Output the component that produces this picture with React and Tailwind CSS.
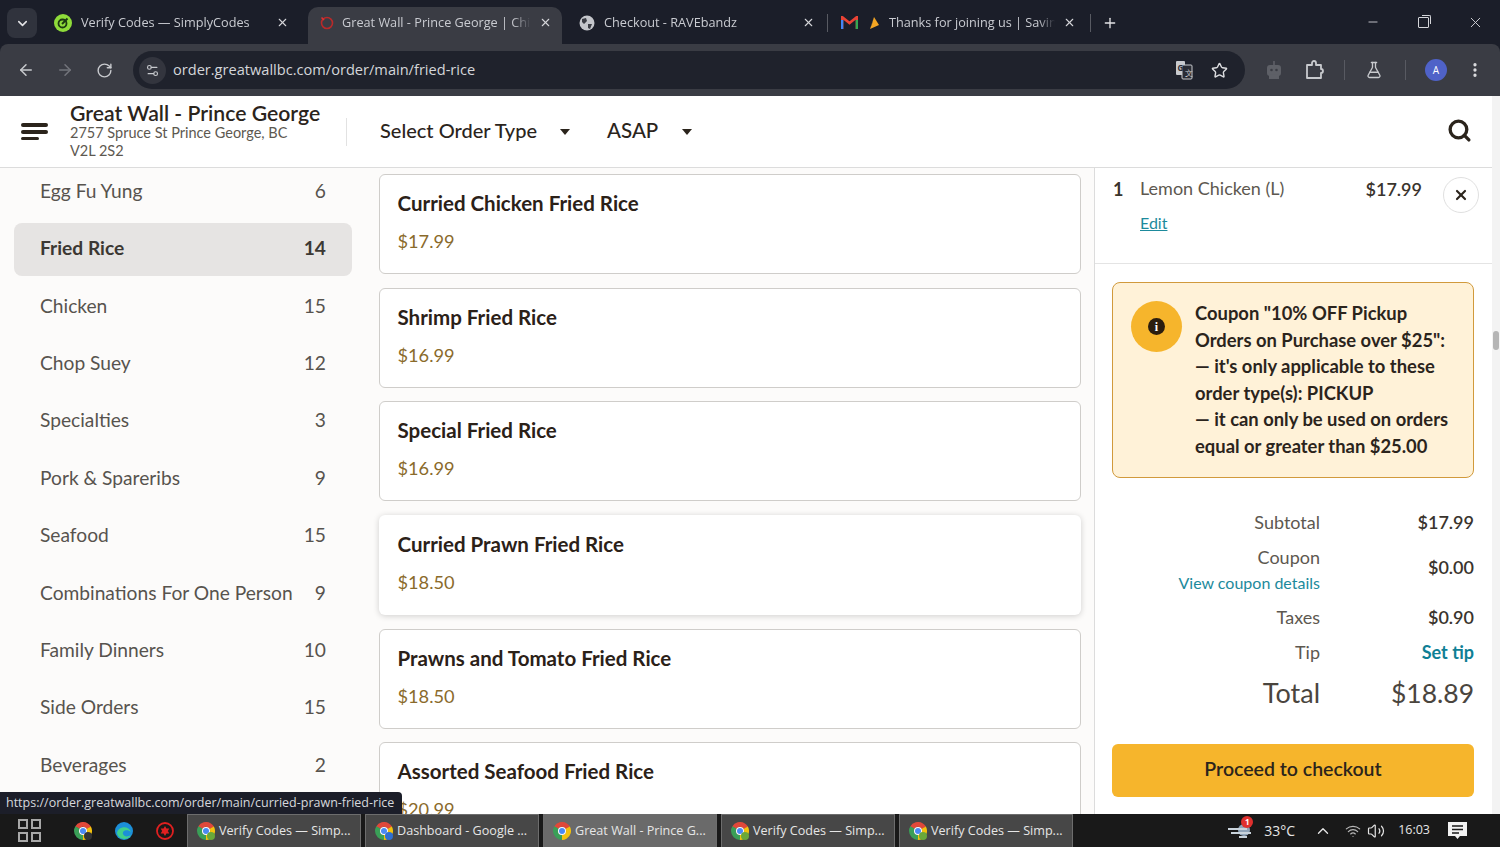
import React from 'react';
import { ArrowLeft, ArrowRight, RotateCw, Star, FlaskConical, EllipsisVertical, Minus, X, Plus, ChevronDown, ChevronUp, Search, Settings2, Volume2, Wifi } from 'lucide-react';

const categories = [
    ['Egg Fu Yung', 6],
    ['Fried Rice', 14],
    ['Chicken', 15],
    ['Chop Suey', 12],
    ['Specialties', 3],
    ['Pork & Spareribs', 9],
    ['Seafood', 15],
    ['Combinations For One Person', 9],
    ['Family Dinners', 10],
    ['Side Orders', 15],
    ['Beverages', 2],
];

const dishes = [
    ['Curried Chicken Fried Rice', '$17.99'],
    ['Shrimp Fried Rice', '$16.99'],
    ['Special Fried Rice', '$16.99'],
    ['Curried Prawn Fried Rice', '$18.50'],
    ['Prawns and Tomato Fried Rice', '$18.50'],
    ['Assorted Seafood Fried Rice', '$20.99'],
];

const ChromeLogo = ({ badge }) => (
    <svg width="18" height="18" viewBox="0 0 18 18" className="shrink-0">
        <circle cx="9" cy="9" r="6.5" fill="none" stroke="#e0483a" strokeWidth="5" strokeDasharray="13.6 27.2" transform="rotate(-150 9 9)" />
        <circle cx="9" cy="9" r="6.5" fill="none" stroke="#f4c20d" strokeWidth="5" strokeDasharray="13.6 27.2" transform="rotate(-30 9 9)" />
        <circle cx="9" cy="9" r="6.5" fill="none" stroke="#3a9f57" strokeWidth="5" strokeDasharray="13.6 27.2" transform="rotate(90 9 9)" />
        <circle cx="9" cy="9" r="4" fill="#fff" />
        <circle cx="9" cy="9" r="3" fill="#4a8af4" />
        {badge && <circle cx="14" cy="14" r="4" fill={badge} />}
    </svg>
);

const Tab = ({ icon, title, active, className }) => (
    <div className={`relative flex items-center h-full shrink-0 ${active ? 'bg-[#3a3c44] rounded-t-[10px]' : ''} ${className}`}>
        {icon}
        <span className="flex-1 min-w-0 overflow-hidden whitespace-nowrap text-[12.7px] text-[#c9cbd1] [mask-image:linear-gradient(to_right,black_90%,transparent)]">{title}</span>
        <X size={13} strokeWidth={2} className="shrink-0 ml-[8px] text-[#d5d6da]" />
    </div>
);

const BrowserTabs = () => (
    <div className="h-[44px] flex items-end pl-[7px] font-['Open_Sans',sans-serif]">
        <div className="w-[30px] h-[30px] mb-[6px] rounded-lg bg-[#30333d] flex items-center justify-center">
            <ChevronDown size={15} strokeWidth={2.5} className="text-[#e3e3e6]" />
        </div>
        <div className="flex h-[37px] ml-[8px] pb-[6px]">
            <Tab
                className="w-[263px] pl-[9px] pr-[19px]"
                title="Verify Codes — SimplyCodes"
                icon={
                    <svg width="18" height="18" viewBox="0 0 18 18" className="mr-[9px] shrink-0">
                        <circle cx="9" cy="9" r="9" fill="#8fdc3a" />
                        <circle cx="8.5" cy="9.5" r="4" fill="none" stroke="#1d3a12" strokeWidth="1.8" />
                        <path d="M8 10 L13.5 4.5" fill="none" stroke="#1d3a12" strokeWidth="2" />
                    </svg>
                }
            />
        </div>
        <Tab
            active
            className="w-[254px] pl-[11px] pr-[10px] !h-[37px] pb-[6px]"
            title="Great Wall - Prince George | Chinese"
            icon={
                <svg width="16" height="16" viewBox="0 0 16 16" className="mr-[7px] shrink-0">
                    <circle cx="8" cy="8" r="5.5" fill="none" stroke="#b92a2a" strokeWidth="1.6" />
                    <path d="M2.5 2.5 L5 5" stroke="#e03030" strokeWidth="1.6" />
                </svg>
            }
        />
        <div className="flex h-[37px] pb-[6px]">
            <Tab
                className="w-[265px] pl-[17px] pr-[12px]"
                title="Checkout - RAVEbandz"
                icon={
                    <svg width="16" height="16" viewBox="0 0 16 16" className="mr-[9px] shrink-0">
                        <circle cx="8" cy="8" r="7.5" fill="#c4c6cb" />
                        <path d="M3 4 L7 3 L8 6 L5 9 L3 7 Z M9 9 L13 9 L11 14 L9 13 Z" fill="#3a3c44" />
                    </svg>
                }
            />
            <div className="w-px h-[18px] mt-[7px] bg-[#585a62]" />
            <Tab
                className="w-[262px] pl-[13px] pr-[14px]"
                title="Thanks for joining us | Saving"
                icon={
                    <>
                        <svg width="17" height="13" viewBox="0 0 17 13" className="mr-[10px] shrink-0">
                            <path d="M1 13 V1 L8.5 7 L16 1 V13" fill="none" stroke="#ea4335" strokeWidth="2.6" />
                            <path d="M1 13 V4" stroke="#4285f4" strokeWidth="2.6" />
                            <path d="M16 13 V4" stroke="#34a853" strokeWidth="2.6" />
                        </svg>
                        <svg width="12" height="14" viewBox="0 0 12 14" className="mr-[9px] shrink-0">
                            <path d="M6 1 L11 9 L2 13 Z" fill="#f5a623" />
                            <path d="M6 1 L2 13 L4 8 Z" fill="#1a2b4a" />
                        </svg>
                    </>
                }
            />
            <div className="w-px h-[18px] mt-[7px] bg-[#585a62]" />
            <Plus size={16} strokeWidth={2} className="text-[#e3e3e6] ml-[11px] mt-[8px]" />
        </div>
        <div className="ml-auto flex items-center h-full text-[#d5d6da] pr-[16px]">
            <Minus size={14} strokeWidth={1.5} />
            <div className="ml-[38px] w-[11px] h-[11px] border border-[#d5d6da] rounded-[1px] relative">
                <div className="absolute -top-[3px] -right-[3px] w-[9px] h-[9px] border-t border-r border-[#d5d6da] rounded-tr-[2px]" />
            </div>
            <X size={17} strokeWidth={1.3} className="ml-[38px]" />
        </div>
    </div>
);

const BrowserToolbar = () => (
    <div className="h-[52px] bg-[#3a3c44] rounded-t-lg flex items-center pl-[17px] pr-[16px] text-[#c8cace] font-['Open_Sans',sans-serif]">
        <ArrowLeft size={18} strokeWidth={2} />
        <ArrowRight size={18} strokeWidth={2} className="ml-[21px] text-[#72747b]" />
        <RotateCw size={17} strokeWidth={2} className="ml-[22px]" />
        <div className="ml-[20px] w-[1113px] h-[38px] rounded-full bg-[#1f222c] flex items-center pl-[6px] pr-[17px]">
            <div className="w-[27px] h-[27px] rounded-full bg-[#33353e] flex items-center justify-center">
                <Settings2 size={15} strokeWidth={1.8} />
            </div>
            <span className="ml-[7px] text-[14.6px] text-[#d4d6da]">order.greatwallbc.com/order/main/fried-rice</span>
            <svg width="18" height="20" viewBox="0 0 18 20" className="ml-auto">
                <rect x="1" y="1" width="9" height="14" rx="1" fill="#c8cace" />
                <rect x="7" y="5" width="10" height="14" rx="1" fill="#2a2c34" stroke="#c8cace" />
                <text x="2.5" y="11" fontSize="8" fontWeight="700" fill="#2a2c34">G</text>
                <text x="9.5" y="16" fontSize="8" fill="#c8cace">文</text>
            </svg>
            <Star size={17} strokeWidth={2} className="ml-[18px] text-[#dcdde0]" />
        </div>
        <svg width="20" height="20" viewBox="0 0 20 20" className="ml-[19px]">
            <path d="M10 1 V5" stroke="#5e6067" strokeWidth="1.6" />
            <rect x="3" y="5" width="14" height="11" rx="3" fill="#5e6067" />
            <rect x="5" y="15" width="10" height="4" fill="#5e6067" />
            <circle cx="7.5" cy="10" r="1.3" fill="#3a3c44" />
            <circle cx="12.5" cy="10" r="1.3" fill="#3a3c44" />
        </svg>
        <svg width="20" height="20" viewBox="0 0 20 20" className="ml-[21px]" fill="none" stroke="#c8cace" strokeWidth="1.8">
            <path d="M2 5 H7 V3 A2 2 0 0 1 11 3 V5 H16 V9 A2 2 0 0 1 16 13 V18 H2 Z" strokeLinejoin="round" />
        </svg>
        <div className="ml-[19px] w-px h-[20px] bg-[#585a62]" />
        <FlaskConical size={18} strokeWidth={1.8} className="ml-[20px]" />
        <div className="ml-[22px] w-px h-[20px] bg-[#585a62]" />
        <div className="ml-[19px] w-[22px] h-[22px] rounded-full bg-[#4f62c8] flex items-center justify-center text-[10px] text-white">A</div>
        <EllipsisVertical size={18} strokeWidth={2.4} className="ml-[19px] text-[#dcdde0]" />
    </div>
);

const PageHeader = () => (
    <div className="h-[72px] bg-white border-b border-[#dcdcdc] flex items-center pl-[21px] pr-[20px] text-[#2b241c]">
        <div className="flex flex-col gap-[3px] w-[27px]">
            <div className="h-[4px] w-[27px] rounded-full bg-[#2b241c]" />
            <div className="h-[4px] w-[27px] rounded-full bg-[#2b241c]" />
            <div className="h-[3px] w-[18px] rounded-full bg-[#2b241c]" />
        </div>
        <div className="ml-[22px] w-[260px] -mt-[2px]">
            <div className="text-[21.2px] leading-[24px] font-semibold">Great Wall - Prince George</div>
            <div className="-mt-[1px] text-[14.5px] leading-[18px] text-[#5d5850]">2757 Spruce St Prince George, BC<br />V2L 2S2</div>
        </div>
        <div className="ml-[16px] w-px h-[28px] bg-[#e2e2e2]" />
        <div className="ml-[33px] -mt-[3px] text-[20px] font-medium">Select Order Type</div>
        <div className="ml-[23px] w-0 h-0 border-x-[5.5px] border-x-transparent border-t-[6px] border-t-[#2b241c]" />
        <div className="ml-[37px] -mt-[3px] text-[20.5px] font-medium">ASAP</div>
        <div className="ml-[24px] w-0 h-0 border-x-[5.5px] border-x-transparent border-t-[6px] border-t-[#2b241c]" />
        <Search size={25} strokeWidth={3.2} className="ml-auto -mt-[3px]" />
    </div>
);

const Sidebar = () => (
    <div className="w-[366px] shrink-0 bg-[#fcfbfa] px-[14px] overflow-hidden">
        <div className="flex flex-col gap-[4.35px] -mt-[2.5px]">
            {categories.map(([name, count]) => (
                <div
                    key={name}
                    className={`h-[53px] shrink-0 rounded-lg flex items-center justify-between pl-[26px] pr-[26px] pb-[1px] text-[19.2px] ${name === 'Fried Rice' ? 'bg-[#e6e4e3] font-bold text-[#3c3833]' : 'text-[#57534e]'}`}
                >
                    <span>{name}</span>
                    <span>{count}</span>
                </div>
            ))}
        </div>
    </div>
);

const MenuList = () => (
    <div className="flex-1 min-w-0 bg-[#fcfbfa] overflow-hidden pt-[6px] pl-[13px] pr-[13px] relative">
        <div className="flex flex-col gap-[13.7px]">
            {dishes.map(([name, price]) => (
                <div
                    key={name}
                    className={`h-[100px] shrink-0 bg-white rounded-md pl-[17.5px] pt-[14px] border ${name === 'Curried Prawn Fried Rice' ? 'border-transparent shadow-[0_1px_6px_rgba(0,0,0,0.18)]' : 'border-[#cfcdca]'}`}
                >
                    <div className="text-[20.5px] leading-[28px] font-bold text-[#2b2118]">{name}</div>
                    <div className="mt-[12px] text-[18.2px] leading-[24px] text-[#8a6a2b]">{price}</div>
                </div>
            ))}
        </div>
    </div>
);

const Cart = () => (
    <div className="w-[398px] shrink-0 bg-white border-l border-[#dcdcdc] overflow-hidden text-[#3a342d]">
        <div className="h-[96px] border-b border-[#e4e4e4] flex pl-[18px] pr-[13px] pt-[9px]">
            <div className="w-[27px] text-[18px] leading-[24px] font-bold">1</div>
            <div className="flex-1">
                <div className="-mt-[1px] text-[18px] leading-[24px] text-[#5d5850]">Lemon Chicken (L)</div>
                <div className="mt-[11px] text-[16px] leading-[24px] text-[#1d8a9c] underline">Edit</div>
            </div>
            <div className="text-[18px] leading-[24px] font-semibold">$17.99</div>
            <div className="ml-[21px] w-[36px] h-[36px] rounded-full border border-[#e0e0e0] flex items-center justify-center">
                <X size={16} strokeWidth={3.2} className="text-[#2b241c]" />
            </div>
        </div>
        <div className="pl-[17px] pr-[18px] pt-[18px]">
            <div className="h-[196px] rounded-lg border border-[#d19a3c] bg-[#fff2d8] flex pl-[18px] pt-[18px]">
                <div className="w-[51px] h-[51px] shrink-0 rounded-full bg-[#f6b52c] flex items-center justify-center">
                    <div className="w-[17px] h-[17px] rounded-full bg-[#2b1d0e] flex items-center justify-center text-white text-[12px] font-bold font-['Liberation_Serif',serif]">i</div>
                </div>
                <div className="ml-[13px] text-[18.4px] leading-[26.5px] font-bold text-[#2b241c] -mt-[1px] whitespace-nowrap">
                    Coupon "10% OFF Pickup<br />
                    Orders on Purchase over $25":<br />
                    — it's only applicable to these<br />
                    order type(s): PICKUP<br />
                    — it can only be used on orders<br />
                    equal or greater than $25.00
                </div>
            </div>
            <div className="mt-[27px] grid grid-cols-[208px_1fr] text-[18px] items-center text-right">
                <div className="leading-[35px] text-[#5d5850]">Subtotal</div>
                <div className="leading-[35px] font-semibold">$17.99</div>
                <div className="leading-[25px] pt-[5px] text-[#5d5850]">
                    Coupon
                    <div className="text-[16px] text-[#1d8a9c]">View coupon details</div>
                </div>
                <div className="leading-[25px] font-semibold">$0.00</div>
                <div className="leading-[35px] mt-[5px] text-[#5d5850]">Taxes</div>
                <div className="leading-[35px] mt-[5px] font-semibold">$0.90</div>
                <div className="leading-[35px] text-[#5d5850]">Tip</div>
                <div className="leading-[35px] font-bold text-[#0f7f95]">Set tip</div>
                <div className="leading-[46px] text-[27px] text-[#4a453e]">Total</div>
                <div className="leading-[46px] text-[26.5px] text-[#4a453e]">$18.89</div>
            </div>
            <div className="mt-[28px] h-[53px] pb-[3px] rounded-md bg-[#f6b52c] flex items-center justify-center text-[19.5px] font-semibold text-[#2b241c]">Proceed to checkout</div>
        </div>
    </div>
);

const TaskButton = ({ label, active, badge }) => (
    <div className={`w-[174px] h-[33px] shrink-0 flex items-center gap-[4px] pl-[9px] border-x border-t border-[#6d6d6d] text-[12.6px] text-[#e6e6e6] ${active ? 'bg-[#6a6a6a]' : 'bg-[#474747]'}`}>
        <ChromeLogo badge={badge} />
        <span className="whitespace-nowrap">{label}</span>
    </div>
);

const Taskbar = () => (
    <div className="h-[33px] bg-[#191919] flex items-center font-['Open_Sans',sans-serif]">
        <div className="ml-[18px] grid grid-cols-2 gap-[3px]">
            <div className="w-[10px] h-[10px] border-2 border-[#a8a8a8]" />
            <div className="w-[10px] h-[10px] border-2 border-[#a8a8a8]" />
            <div className="w-[10px] h-[10px] border-2 border-[#a8a8a8]" />
            <div className="w-[10px] h-[10px] border-2 border-[#a8a8a8]" />
        </div>
        <div className="ml-[33px]"><ChromeLogo badge="#333" /></div>
        <svg width="20" height="20" viewBox="0 0 20 20" className="ml-[22px]">
            <circle cx="10" cy="10" r="9" fill="#1c8fd8" />
            <path d="M3 12 C4 5 15 4 17 11 C14 8 8 9 9 13 C10 16 14 16 17 14 C14 20 4 19 3 12 Z" fill="#3fd08c" />
        </svg>
        <svg width="20" height="20" viewBox="0 0 20 20" className="ml-[21px]" fill="none">
            <circle cx="10" cy="10" r="8" stroke="#e02020" strokeWidth="1.8" />
            <path d="M10 5 L14.3 12.5 H5.7 Z M10 15 L5.7 7.5 H14.3 Z" fill="#e02020" />
        </svg>
        <div className="ml-[12px] flex gap-[4px]">
            <TaskButton label="Verify Codes — Simp..." badge="#6aa83a" />
            <TaskButton label="Dashboard - Google ..." badge="#2f6fd0" />
            <TaskButton label="Great Wall - Prince G..." active />
            <TaskButton label="Verify Codes — Simp..." badge="#6aa83a" />
            <TaskButton label="Verify Codes — Simp..." badge="#6aa83a" />
        </div>
        <div className="ml-auto flex items-center text-[#e6e6e6] text-[14px] pr-[33px]">
            <div className="relative">
                <svg width="26" height="22" viewBox="0 0 26 22">
                    <circle cx="17" cy="10" r="6" fill="#8fa3b8" />
                    <path d="M1 9 H20 M4 13 H24 M12 17 H20" stroke="#c9d3dc" strokeWidth="2" />
                </svg>
                <div className="absolute -top-[4px] right-0 w-[12px] h-[12px] rounded-full bg-[#e0302e] text-white text-[8px] leading-[12px] text-center font-bold">1</div>
            </div>
            <span className="ml-[11px]">33°C</span>
            <ChevronUp size={18} strokeWidth={1.8} className="ml-[19px]" />
            <Wifi size={16} strokeWidth={1.8} className="ml-[13px] text-[#b8b8b8]" />
            <Volume2 size={18} strokeWidth={1.6} className="ml-[6px]" />
            <span className="ml-[13px] text-[12.5px]">16:03</span>
            <svg width="19" height="18" viewBox="0 0 19 18" className="ml-[18px]">
                <path d="M0 0 H19 V14 H12 L9.5 17 L7 14 H0 Z" fill="#f2f2f2" />
                <path d="M4 4 H15 M4 7.5 H15 M4 11 H11" stroke="#191919" strokeWidth="1.3" />
            </svg>
        </div>
    </div>
);

const App = () => {
    return (
        <div className="w-[1500px] h-[847px] flex flex-col overflow-hidden relative bg-[#1b1e29]">
            <BrowserTabs />
            <BrowserToolbar />
            <div className="flex-1 min-h-0 flex font-['Lato',sans-serif]">
                <div className="flex-1 min-w-0 flex flex-col">
                    <PageHeader />
                    <div className="flex-1 min-h-0 flex">
                        <Sidebar />
                        <MenuList />
                        <Cart />
                    </div>
                </div>
                <div className="w-[8px] bg-[#f3f3f3] pt-[235px] px-[1px]">
                    <div className="w-[6px] h-[19px] rounded-full bg-[#b5b5b5]" />
                </div>
            </div>
            <Taskbar />
            <div className="absolute left-0 bottom-[33px] h-[22px] w-[402px] bg-[#1c1e29] rounded-tr-[4px] flex items-center pl-[6px] text-[12.5px] text-[#d6d8dc] font-['Open_Sans',sans-serif] whitespace-nowrap">
                https://order.greatwallbc.com/order/main/curried-prawn-fried-rice
            </div>
        </div>
    );
};

export default App;
